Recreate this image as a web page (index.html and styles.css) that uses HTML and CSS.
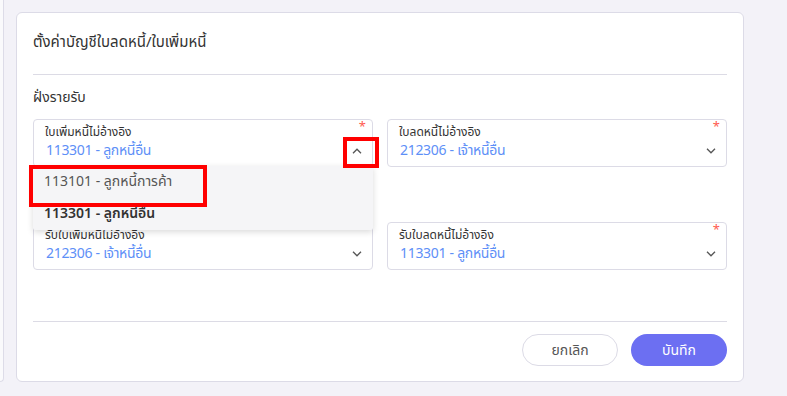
FILE: index.html
```html
<!DOCTYPE html>
<html lang="th">
<head>
    <meta charset="UTF-8">
    <meta name="viewport" content="width=device-width, initial-scale=1.0">
    <title>ตั้งค่าบัญชีใบลดหนี้/ใบเพิ่มหนี้</title>
    <link rel="stylesheet" href="styles.css">
</head>
<body>
    <div class="sidebar"></div>

    <div class="main">
        <div class="card">
            <h1 class="card-title">ตั้งค่าบัญชีใบลดหนี้/ใบเพิ่มหนี้</h1>
            <hr class="divider">

            <h2 class="section-title">ฝั่งรายรับ</h2>

            <div class="field-grid">
                <div class="field open">
                    <span class="required">*</span>
                    <div class="field-label">ใบเพิ่มหนี้ไม่อ้างอิง</div>
                    <div class="field-value">113301 - ลูกหนี้อื่น</div>
                    <svg class="chevron" width="10" height="6" viewBox="0 0 10 6"><path d="M1 5.2 L5 1.2 L9 5.2" fill="none" stroke="#555" stroke-width="1.3"/></svg>
                    <span class="mark mark-arrow"></span>

                    <div class="dropdown">
                        <div class="option">113101 - ลูกหนี้การค้า</div>
                        <div class="option selected">113301 - ลูกหนี้อื่น</div>
                        <span class="mark mark-option"></span>
                    </div>
                </div>

                <div class="field">
                    <span class="required">*</span>
                    <div class="field-label">ใบลดหนี้ไม่อ้างอิง</div>
                    <div class="field-value">212306 - เจ้าหนี้อื่น</div>
                    <svg class="chevron" width="10" height="6" viewBox="0 0 10 6"><path d="M1 0.8 L5 4.8 L9 0.8" fill="none" stroke="#555" stroke-width="1.3"/></svg>
                </div>

                <div class="field">
                    <span class="required">*</span>
                    <div class="field-label">รับใบเพิ่มหนี้ไม่อ้างอิง</div>
                    <div class="field-value">212306 - เจ้าหนี้อื่น</div>
                    <svg class="chevron" width="10" height="6" viewBox="0 0 10 6"><path d="M1 0.8 L5 4.8 L9 0.8" fill="none" stroke="#555" stroke-width="1.3"/></svg>
                </div>

                <div class="field">
                    <span class="required">*</span>
                    <div class="field-label">รับใบลดหนี้ไม่อ้างอิง</div>
                    <div class="field-value">113301 - ลูกหนี้อื่น</div>
                    <svg class="chevron" width="10" height="6" viewBox="0 0 10 6"><path d="M1 0.8 L5 4.8 L9 0.8" fill="none" stroke="#555" stroke-width="1.3"/></svg>
                </div>
            </div>

            <hr class="divider footer-divider">

            <div class="actions">
                <button class="btn btn-cancel">ยกเลิก</button>
                <button class="btn btn-save">บันทึก</button>
            </div>
        </div>
    </div>
</body>
</html>
```

FILE: styles.css
```css
body {
    margin: 0;
    background-color: #f3f2f8;
    font-family: "Noto Sans Thai", "Noto Sans", "DejaVu Sans", sans-serif;
    color: #333;
    display: flex;
    align-items: flex-start;
    height: 396px;
    overflow: hidden;
}
.sidebar {
    width: 3px;
    height: 381px;
    background-color: #fafafc;
    border-right: 1px solid #dddce8;
    border-bottom: 1px solid #dddce8;
    border-bottom-right-radius: 4px;
    flex-shrink: 0;
}
.main {
    flex: 1;
    padding: 12px 43px 0 12px;
}
.card {
    background-color: white;
    border: 1px solid #dcdbe7;
    border-radius: 6px;
    padding: 19px 16px 15px;
}
.card-title {
    margin: 0;
    font-size: 15px;
    line-height: 22px;
    font-weight: normal;
    color: #333;
}
.divider {
    border: none;
    border-top: 1px solid #dcdbe5;
    height: 0;
    margin: 20px 0 0;
}
.section-title {
    margin: 12px 0 10px;
    font-size: 14px;
    line-height: 22px;
    font-weight: normal;
    color: #333;
}
.field-grid {
    display: grid;
    grid-template-columns: 1fr 1fr;
    column-gap: 14px;
    row-gap: 55px;
}
.field {
    position: relative;
    border: 1px solid #dcdbe6;
    border-radius: 4px;
    padding: 3px 12px 5px 11px;
}
.field-label {
    font-size: 12px;
    line-height: 18px;
    color: #333;
}
.field-value {
    font-size: 14px;
    line-height: 20px;
    color: #5e8ff7;
    padding-left: 1px;
    letter-spacing: -0.3px;
}
.required {
    position: absolute;
    top: 1px;
    right: 6px;
    font-size: 13px;
    line-height: 13px;
    color: #ff5a4f;
}
.chevron {
    position: absolute;
    right: 10px;
    top: 28px;
}
.dropdown {
    position: absolute;
    top: 100%;
    left: -1px;
    right: -1px;
    background-color: #f5f5f7;
    box-shadow: 0 2px 6px rgba(0, 0, 0, 0.15);
    border-radius: 2px;
    z-index: 2;
}
.option {
    height: 32px;
    line-height: 32px;
    padding-left: 11px;
    font-size: 14px;
    color: #555;
}
.option.selected {
    font-weight: 600;
    color: #333;
}
.mark {
    position: absolute;
    border: 4px solid #ff0000;
    z-index: 3;
}
.mark-option {
    left: -4px;
    top: -1px;
    width: 170px;
    height: 34px;
}
.mark-arrow {
    right: -7px;
    top: 17px;
    width: 28px;
    height: 23px;
}
.footer-divider {
    margin-top: 51px;
}
.actions {
    display: flex;
    justify-content: flex-end;
    gap: 13px;
    margin-top: 12px;
}
.btn {
    height: 32px;
    width: 96px;
    border-radius: 16px;
    font-family: inherit;
    font-size: 14px;
    cursor: pointer;
}
.btn-cancel {
    background-color: white;
    border: 1px solid #dcdbe6;
    color: #555;
}
.btn-save {
    background-color: #6c6ff2;
    border: none;
    color: white;
}
```
